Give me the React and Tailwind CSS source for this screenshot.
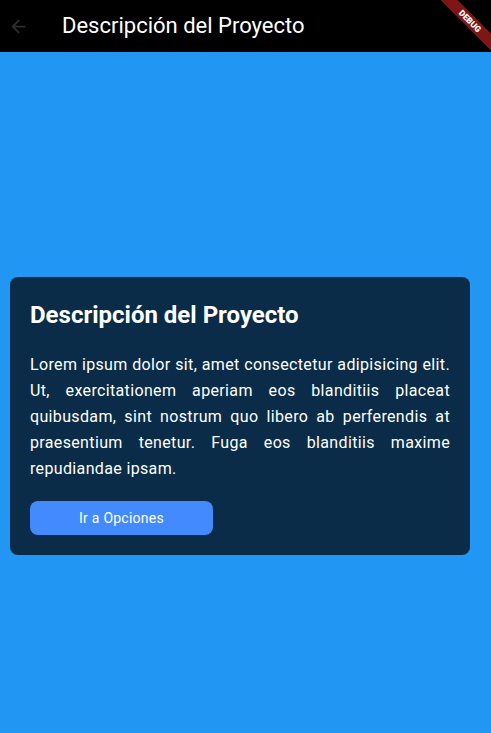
import React from "react";

export default function App() {
  return (
    <div className="relative w-[491px] h-[733px] bg-[#2196f3] overflow-hidden flex flex-col" style={{ fontFamily: "Roboto, 'Noto Sans', sans-serif" }}>
      <div className="h-[52px] bg-black flex items-center shrink-0">
        <div className="w-[56px] flex items-center justify-start pl-[8px]">
          <svg width="21" height="21" viewBox="0 0 24 24" fill="none">
            <path d="M20 11H7.83l5.59-5.59L12 4l-8 8 8 8 1.41-1.41L7.83 13H20v-2z" fill="#2e2e2e" />
          </svg>
        </div>
        <div className="ml-[6px] text-white text-[22px] leading-none">Descripción del Proyecto</div>
      </div>
      <div className="flex-1 pl-[10px] pr-[21px] pt-[225px]">
        <div className="bg-[#0a2c48] rounded-[8px] p-[20px]">
          <h1 className="text-white text-[24px] font-bold leading-[36px]">Descripción del Proyecto</h1>
          <p className="mt-[19px] text-white text-[16px] leading-[26px] text-justify font-normal tracking-[0.35px]">
            Lorem ipsum dolor sit, amet consectetur adipisicing elit. Ut, exercitationem aperiam eos blanditiis placeat quibusdam, sint nostrum quo libero ab perferendis at praesentium tenetur. Fuga eos blanditiis maxime repudiandae ipsam.
          </p>
          <button className="mt-[19px] w-[183px] h-[34px] bg-[#448aff] rounded-[8px] text-white text-[14px] font-normal tracking-[0.25px] flex items-center justify-center">
            Ir a Opciones
          </button>
        </div>
      </div>
      <div className="absolute top-[15px] left-[430px] w-[80px] h-[12px] bg-[#7f1616] rotate-45 flex items-center justify-center">
        <span className="text-white text-[8.5px] font-black leading-none">DEBUG</span>
      </div>
    </div>
  );
}
